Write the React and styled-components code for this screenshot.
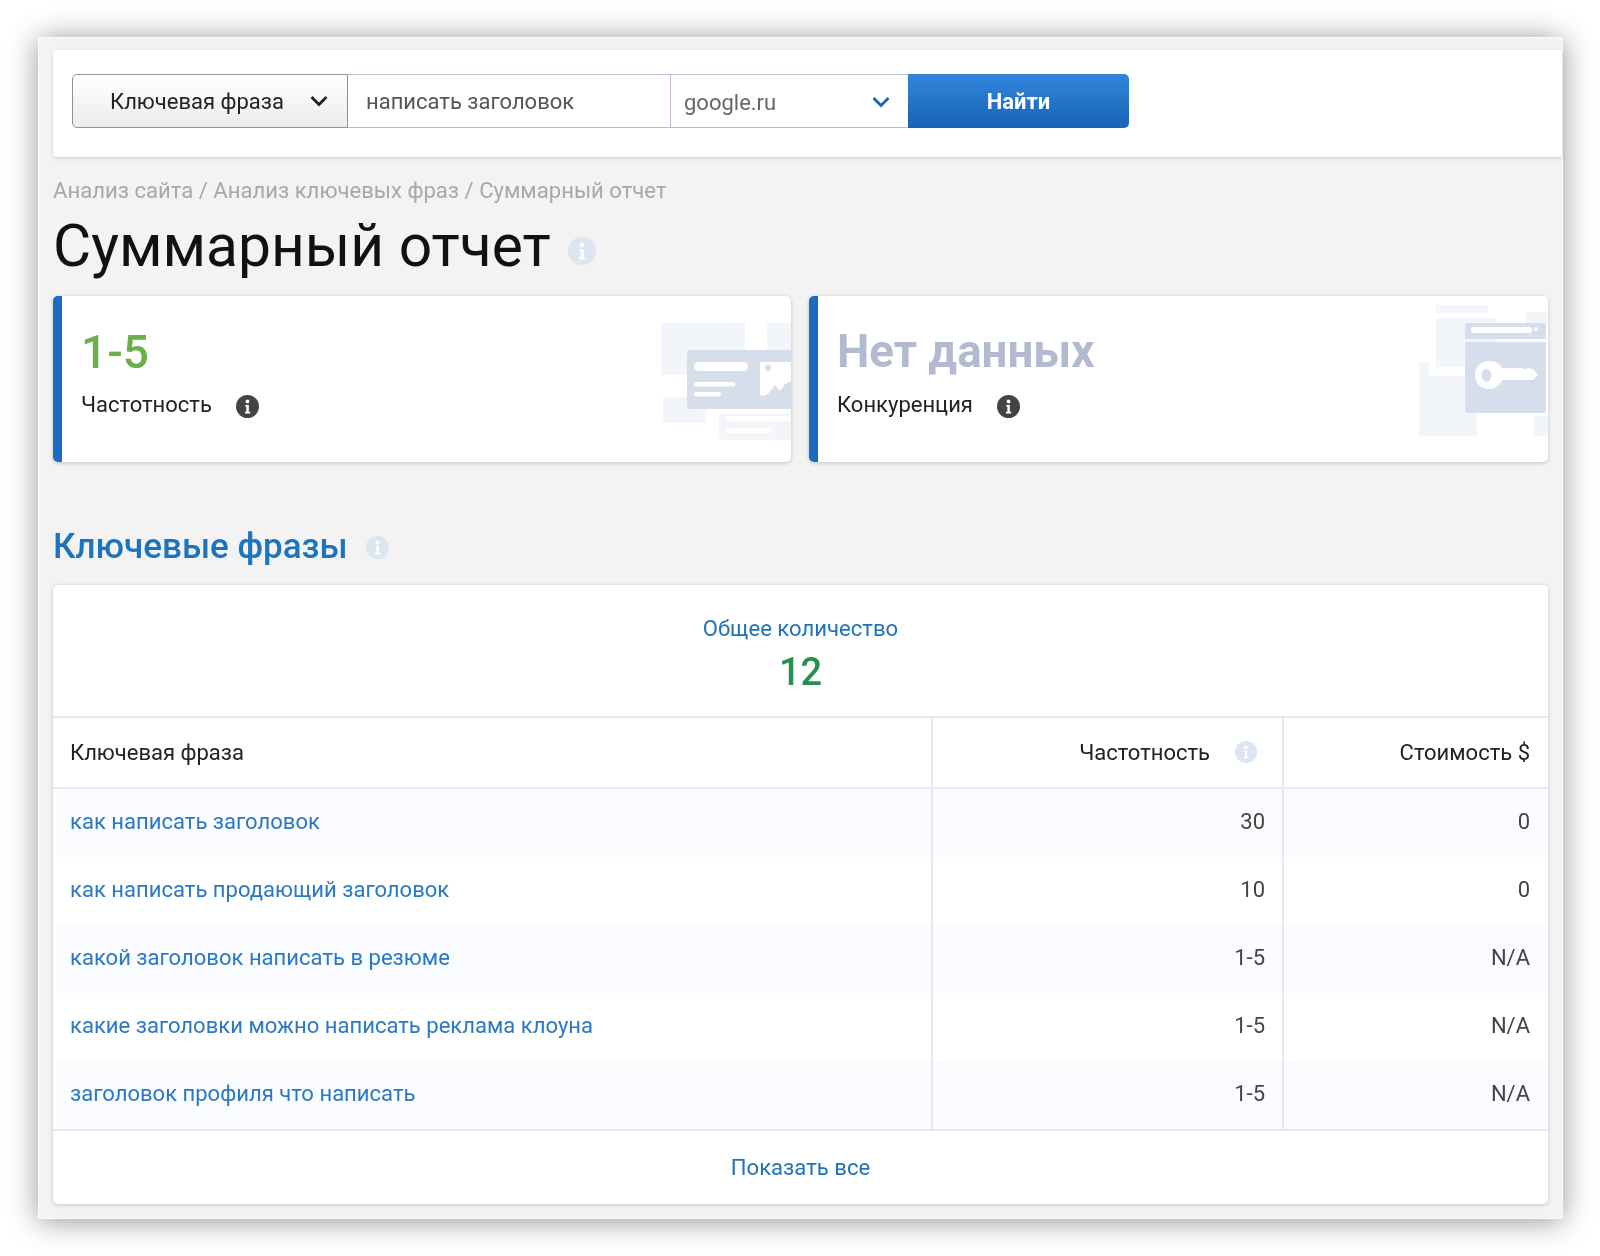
import React from 'react'
import styled, { createGlobalStyle } from 'styled-components'

const GlobalStyle = createGlobalStyle`
  html, body {
    margin: 0;
    background: #fff;
  }
  body {
    font-family: Roboto, "Liberation Sans", sans-serif;
  }
`

const rows = [
  { phrase: 'как написать заголовок', freq: '30', cost: '0' },
  { phrase: 'как написать продающий заголовок', freq: '10', cost: '0' },
  { phrase: 'какой заголовок написать в резюме', freq: '1-5', cost: 'N/A' },
  { phrase: 'какие заголовки можно написать реклама клоуна', freq: '1-5', cost: 'N/A' },
  { phrase: 'заголовок профиля что написать', freq: '1-5', cost: 'N/A' },
]

const InfoIcon = ({ size = 24, bg = '#dde5f2', className }) => (
  <svg className={className} width={size} height={size} viewBox="0 0 24 24">
    <circle cx="12" cy="12" r="12" fill={bg} />
    <circle cx="12" cy="6.8" r="2" fill="#fff" />
    <path d="M9.6 10.4h3.800v7.200h1.400v1.600H9.400v-1.600h1.400v-5.600H9.600z" fill="#fff" />
  </svg>
)

const Chevron = ({ color }) => (
  <svg width="20" height="12" viewBox="0 0 20 12">
    <path d="M2.500 2l7.500 7.500L17.500 2" fill="none" stroke={color} strokeWidth="2.800" />
  </svg>
)

const CardArtOne = () => (
  <ArtOne width="131" height="120" viewBox="0 0 131 120">
    <g fill="#f2f5fa">
      <rect x="1" y="2" width="84" height="52" rx="2" />
      <rect x="107" y="2" width="24" height="28" rx="2" />
      <rect x="3" y="76" width="43" height="26" rx="2" />
      <path d="M59 93h72v26H63a4 4 0 0 1-4-4z" />
    </g>
    <g fill="#fff">
      <rect x="65" y="95" width="66" height="5" rx="2.500" />
      <rect x="65" y="107" width="48" height="5" rx="2.500" />
    </g>
    <path d="M27 33a4 4 0 0 1 4-4h100v59H31a4 4 0 0 1-4-4z" fill="#d7deeb" />
    <g fill="#fff">
      <rect x="34" y="41" width="54" height="9" rx="4.500" />
      <rect x="34" y="61" width="41" height="4.500" rx="2.200" />
      <rect x="34" y="71" width="27" height="4.500" rx="2.200" />
      <path d="M100 41h31v19l-6 3-5 7-5-6-7 9-5 2a3 3 0 0 1-3-3z" />
    </g>
    <circle cx="108" cy="47" r="3" fill="#d7deeb" />
  </ArtOne>
)

const CardArtTwo = () => (
  <ArtTwo width="132" height="140" viewBox="0 0 132 140">
    <g fill="#f2f5fa">
      <rect x="20" y="5" width="52" height="8" />
      <rect x="20" y="18" width="60" height="49" />
      <rect x="110" y="12" width="21" height="12" />
      <path d="M3 62h10v12a2 2 0 0 0 2 2h46v60H3z" />
      <rect x="118" y="116" width="14" height="20" />
    </g>
    <path d="M49 25a2 2 0 0 1 2-2h77a2 2 0 0 1 2 2v14H49z" fill="#d7deeb" />
    <rect x="55" y="27" width="61" height="6" rx="2" fill="#fff" />
    <circle cx="120" cy="29" r="2" fill="#fff" />
    <path d="M49 42h81v69a2 2 0 0 1-2 2H51a2 2 0 0 1-2-2z" fill="#d7deeb" />
    <path d="M74 61a14 14 0 0 1 12 7h20l3 1.500 3-1.500 5 1 5 6-5 5H86a14 14 0 1 1-12-19z" fill="#fff" />
    <ellipse cx="70.500" cy="75.500" rx="5" ry="6.500" fill="#d7deeb" />
  </ArtTwo>
)

export default function App() {
  return (
    <Page>
      <GlobalStyle />
      <Frame>
        <SearchCard>
          <SearchForm>
            <TypeSelect>
              Ключевая фраза
              <Chevron color="#222" />
            </TypeSelect>
            <QueryField>написать заголовок</QueryField>
            <EngineSelect>
              google.ru
              <Chevron color="#1a66b5" />
            </EngineSelect>
            <SearchButton>Найти</SearchButton>
          </SearchForm>
        </SearchCard>

        <Breadcrumbs>Анализ сайта / Анализ ключевых фраз / Суммарный отчет</Breadcrumbs>
        <PageTitle>
          Суммарный отчет
          <InfoIcon size={28} />
        </PageTitle>

        <StatCards>
          <StatCard>
            <StatValue $color="#6cb04e">1-5</StatValue>
            <StatLabel>
              Частотность
              <InfoIcon size={23} bg="#444" />
            </StatLabel>
            <CardArtOne />
          </StatCard>
          <StatCard>
            <StatValue $color="#b1bacf" $bold>Нет данных</StatValue>
            <StatLabel>
              Конкуренция
              <InfoIcon size={23} bg="#444" />
            </StatLabel>
            <CardArtTwo />
          </StatCard>
        </StatCards>

        <SectionTitle>
          Ключевые фразы
          <InfoIcon size={23} />
        </SectionTitle>

        <TableCard>
          <Summary>
            <SummaryLabel>Общее количество</SummaryLabel>
            <SummaryValue>12</SummaryValue>
          </Summary>
          <HeadRow>
            <HeadCell>Ключевая фраза</HeadCell>
            <HeadCell $right $inset>
              Частотность
              <InfoIcon size={22} />
            </HeadCell>
            <HeadCell $right>Стоимость $</HeadCell>
          </HeadRow>
          {rows.map((row, i) => (
            <DataRow key={row.phrase} $tinted={i % 2 === 0}>
              <PhraseCell>{row.phrase}</PhraseCell>
              <NumCell $pad="17px">{row.freq}</NumCell>
              <NumCell $pad="18px">{row.cost}</NumCell>
            </DataRow>
          ))}
          <ShowAll>Показать все</ShowAll>
        </TableCard>
      </Frame>
    </Page>
  )
}

const Page = styled.div`
  width: 1600px;
  height: 1256px;
  padding: 37px 37px 37px 38px;
  box-sizing: border-box;
  overflow: hidden;
`

const Frame = styled.div`
  height: 100%;
  box-sizing: border-box;
  padding: 12px 14px 0 14px;
  background: #f3f3f3;
  border: 1px solid #fbfbfb;
  box-shadow: 0 2px 28px rgba(0, 0, 0, 0.42);
  filter: blur(0.5px);
`

const SearchCard = styled.div`
  margin-right: -14px;
  height: 107px;
  box-sizing: border-box;
  padding: 24px 0 0 19px;
  background: #fff;
  border-radius: 4px 0 0 4px;
  box-shadow: 0 1px 4px rgba(0, 0, 0, 0.16);
`

const SearchForm = styled.div`
  display: flex;
  height: 54px;
`

const TypeSelect = styled.div`
  width: 276px;
  box-sizing: border-box;
  display: flex;
  align-items: center;
  justify-content: space-between;
  padding: 0 18px 0 37px;
  font-size: 22px;
  color: #222;
  background: linear-gradient(#fff, #ececec);
  border: 1px solid #8f9299;
  border-radius: 5px 0 0 5px;
`

const QueryField = styled.div`
  width: 322px;
  box-sizing: border-box;
  display: flex;
  align-items: center;
  padding-left: 18px;
  font-size: 22px;
  color: #555;
  border: solid #b7bdd0;
  border-width: 1px 0;
`

const EngineSelect = styled.div`
  width: 238px;
  box-sizing: border-box;
  display: flex;
  align-items: center;
  justify-content: space-between;
  padding: 2px 17px 0 13px;
  font-size: 22px;
  color: #666;
  border: 1px solid #b7bdd0;
  border-right: none;
`

const SearchButton = styled.div`
  width: 221px;
  display: flex;
  align-items: center;
  justify-content: center;
  font-size: 22px;
  font-weight: 700;
  color: #fff;
  background: linear-gradient(#3187db, #1763b7);
  border-radius: 0 5px 5px 0;
`

const Breadcrumbs = styled.div`
  margin-top: 19px;
  font-size: 22.1px;
  line-height: 28px;
  color: #a8a8a8;
`

const PageTitle = styled.h1`
  display: flex;
  align-items: center;
  gap: 17px;
  margin: 9px 0 0;
  height: 66px;
  font-size: 58.7px;
  font-weight: 400;
  color: #111;

  svg {
    margin-top: 10px;
  }
`

const StatCards = styled.div`
  display: grid;
  grid-template-columns: 738px 739px;
  gap: 18px;
  margin-top: 17px;
`

const StatCard = styled.div`
  position: relative;
  height: 166px;
  box-sizing: border-box;
  padding: 28px 0 0 19px;
  background: #fff;
  border-left: 9px solid #1a6bc4;
  border-radius: 5px;
  box-shadow: 0 1px 4px rgba(0, 0, 0, 0.2);
  overflow: hidden;
`

const StatValue = styled.div`
  font-size: ${p => (p.$bold ? '45.7px' : '46px')};
  font-weight: ${p => (p.$bold ? 700 : 500)};
  line-height: 56px;
  color: ${p => p.$color};
`

const StatLabel = styled.div`
  display: flex;
  align-items: center;
  gap: 24px;
  margin-top: 11px;
  font-size: 22px;
  color: #222;

  svg {
    margin-top: 4px;
  }
`

const ArtOne = styled.svg`
  position: absolute;
  right: 0;
  top: 25px;
`

const ArtTwo = styled.svg`
  position: absolute;
  right: 0;
  top: 4px;
`

const SectionTitle = styled.h2`
  display: flex;
  align-items: center;
  gap: 18px;
  margin: 64px 0 0;
  height: 40px;
  font-size: 35px;
  font-weight: 500;
  color: #1e73be;

  svg {
    margin-top: 2px;
  }
`

const TableCard = styled.div`
  margin-top: 19px;
  background: #fff;
  border-radius: 5px;
  box-shadow: 0 1px 4px rgba(0, 0, 0, 0.2);
  overflow: hidden;
`

const Summary = styled.div`
  height: 133px;
  box-sizing: border-box;
  padding-top: 29px;
  text-align: center;
  border-bottom: 2px solid #e6e9f3;
`

const SummaryLabel = styled.div`
  font-size: 22.1px;
  line-height: 28px;
  color: #1e73be;
`

const SummaryValue = styled.div`
  margin-top: 8px;
  font-size: 38px;
  font-weight: 500;
  line-height: 44px;
  color: #27904f;
`

const rowColumns = `
  display: grid;
  grid-template-columns: 878px 351px 1fr;
`

const HeadRow = styled.div`
  ${rowColumns}
  height: 69px;
  border-bottom: 2px solid #e6e9f3;
`

const HeadCell = styled.div`
  display: flex;
  align-items: center;
  justify-content: ${p => (p.$right ? 'flex-end' : 'flex-start')};
  gap: 25px;
  padding: 0 ${p => (p.$inset ? '25px' : '18px')} 1px 17px;
  font-size: 22px;
  color: #222;
  border-left: ${p => (p.$right ? '2px solid #e6e9f3' : 'none')};
`

const DataRow = styled.div`
  ${rowColumns}
  height: 68px;
  background: ${p => (p.$tinted ? '#fbfcff' : '#fff')};
`

const PhraseCell = styled.div`
  display: flex;
  align-items: center;
  padding: 0 0 4px 17px;
  font-size: 22.05px;
  color: #2a78c6;
`

const NumCell = styled.div`
  display: flex;
  align-items: center;
  justify-content: flex-end;
  padding: 0 ${p => p.$pad} 4px 0;
  font-size: 22px;
  color: #444;
  border-left: 2px solid #e6e9f3;
`

const ShowAll = styled.div`
  height: 75px;
  box-sizing: border-box;
  padding-bottom: 2px;
  display: flex;
  align-items: center;
  justify-content: center;
  font-size: 22.1px;
  color: #1e73be;
  border-top: 2px solid #e6e9f3;
`
